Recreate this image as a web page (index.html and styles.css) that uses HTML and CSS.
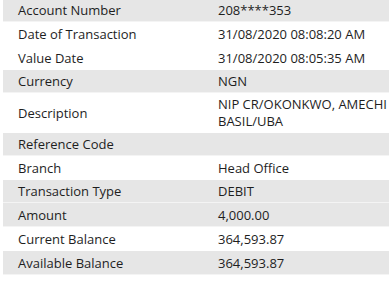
FILE: index.html
```html
<!DOCTYPE html>
<html>
<head>
<meta charset="utf-8">
<link rel="stylesheet" href="styles.css">
</head>
<body>
<table class="details">
  <tr class="shade first"><td class="label">Account Number</td><td class="value">208****353</td></tr>
  <tr><td class="label">Date of Transaction</td><td class="value">31/08/2020 08:08:20 AM</td></tr>
  <tr><td class="label">Value Date</td><td class="value">31/08/2020 08:05:35 AM</td></tr>
  <tr class="shade short"><td class="label">Currency</td><td class="value">NGN</td></tr>
  <tr class="tall"><td class="label">Description</td><td class="value">NIP CR/OKONKWO, AMECHI BASIL/UBA</td></tr>
  <tr class="shade short"><td class="label">Reference Code</td><td class="value"></td></tr>
  <tr><td class="label">Branch</td><td class="value">Head Office</td></tr>
  <tr class="shade short"><td class="label">Transaction Type</td><td class="value">DEBIT</td></tr>
  <tr class="shade"><td class="label">Amount</td><td class="value">4,000.00</td></tr>
  <tr><td class="label">Current Balance</td><td class="value">364,593.87</td></tr>
  <tr class="shade"><td class="label">Available Balance</td><td class="value">364,593.87</td></tr>
</table>
</body>
</html>
```
FILE: styles.css
```css
html, body {
  margin: 0;
  padding: 0;
  background: #ffffff;
}
body {
  padding-left: 3px;
  font-family: "Open Sans", "Noto Sans", sans-serif;
  font-size: 13px;
  color: #1e1e1e;
}
.details {
  border-collapse: collapse;
  border-spacing: 0;
  width: 386px;
  table-layout: fixed;
}
.details td {
  padding: 0 0 0 15px;
  line-height: 17px;
  height: 24px;
  box-sizing: border-box;
  vertical-align: middle;
}
.details .label {
  width: 200px;
}
.details .value {
  padding-right: 0;
}
.details tr.first td {
  height: 22px;
  padding-bottom: 1px;
}
.details tr.short td {
  height: 23px;
}
.details tr.tall td {
  height: 40px;
}
.details tr.shade td {
  background: #e6e6e6;
  box-shadow: inset 0 -1px 0 #f4f4f4;
}
```
